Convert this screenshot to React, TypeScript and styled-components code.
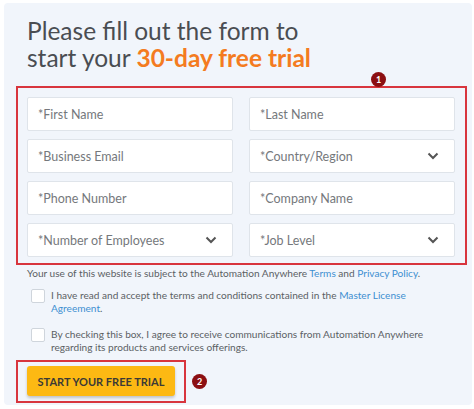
import React from 'react';
import styled, { createGlobalStyle } from 'styled-components';

const GlobalStyle = createGlobalStyle`
  html, body {
    margin: 0;
    padding: 0;
    background: #ffffff;
  }
  body {
    font-family: Lato, "Open Sans", "Liberation Sans", sans-serif;
  }
`;

const Chevron = () => (
  <svg width="12" height="8" viewBox="0 0 12 8">
    <path d="M1.5 1.5 L6 6 L10.5 1.5" fill="none" stroke="#555" strokeWidth="2" />
  </svg>
);

const App = () => {
  return (
    <>
      <GlobalStyle />
      <Panel>
        <Title>
          Please fill out the form to
          <br />
          start your <Accent>30-day free trial</Accent>
        </Title>
        <BadgeRow>
          <Badge>1</Badge>
        </BadgeRow>
        <Highlight>
          <FieldGrid>
            <Field>*First Name</Field>
            <Field>*Last Name</Field>
            <Field>*Business Email</Field>
            <Field>
              *Country/Region
              <Chevron />
            </Field>
            <Field>*Phone Number</Field>
            <Field>*Company Name</Field>
            <Field>
              *Number of Employees
              <Chevron />
            </Field>
            <Field>
              *Job Level
              <Chevron />
            </Field>
          </FieldGrid>
        </Highlight>
        <Notice>
          Your use of this website is subject to the Automation Anywhere <Link>Terms</Link> and{' '}
          <Link>Privacy Policy</Link>.
        </Notice>
        <CheckRow>
          <Box />
          <CheckText>
            I have read and accept the terms and conditions contained in the <Link>Master License Agreement</Link>.
          </CheckText>
        </CheckRow>
        <CheckRow>
          <Box />
          <CheckText>
            By checking this box, I agree to receive communications from Automation Anywhere regarding its products
            and services offerings.
          </CheckText>
        </CheckRow>
        <ButtonRow>
          <ButtonFrame>
            <TrialButton>START YOUR FREE TRIAL</TrialButton>
          </ButtonFrame>
          <Badge>2</Badge>
        </ButtonRow>
      </Panel>
    </>
  );
};

const Panel = styled.div`
  margin: 3px 2px 0 4px;
  height: 402px;
  box-sizing: border-box;
  background: #f1f5fb;
  border-radius: 4px;
  padding: 14px 5px 0 12px;
`;

const Title = styled.h1`
  margin: 0 0 0 11px;
  font-size: 24.5px;
  line-height: 27px;
  font-weight: 400;
  color: #4a4d52;
`;

const Accent = styled.span`
  color: #f47b20;
  font-weight: 700;
`;

const BadgeRow = styled.div`
  display: flex;
  justify-content: flex-end;
  padding-right: 81px;
  margin-top: 1px;
  height: 15px;
`;

const Badge = styled.span`
  width: 15px;
  height: 15px;
  border-radius: 50%;
  background: #8c0f12;
  color: #fff;
  font-size: 9px;
  font-weight: 700;
  display: flex;
  align-items: center;
  justify-content: center;
  line-height: 1;
`;

const Highlight = styled.div`
  border: 2px solid #d8353d;
  margin-top: -1px;
  padding: 9px 10px 6px 9px;
`;

const FieldGrid = styled.div`
  display: grid;
  grid-template-columns: 206px 206px;
  column-gap: 16px;
  row-gap: 8px;
`;

const Field = styled.div`
  height: 34px;
  box-sizing: border-box;
  background: #fff;
  border: 1px solid #dfe4ea;
  border-radius: 2px;
  padding: 0 15px 0 10px;
  display: flex;
  align-items: center;
  justify-content: space-between;
  font-size: 12.5px;
  color: #75787c;
`;

const Notice = styled.p`
  margin: 2px 0 0 11px;
  font-size: 10.1px;
  color: #5b5f64;
`;

const Link = styled.span`
  color: #3d8fd1;
`;

const CheckRow = styled.div`
  display: flex;
  gap: 6px;
  margin: 10px 34px 0 15px;
  & + & {
    margin-top: 14px;
  }
`;

const Box = styled.span`
  flex: none;
  width: 12px;
  height: 12px;
  background: #fff;
  border: 1px solid #cfd5dc;
  border-radius: 2px;
`;

const CheckText = styled.span`
  font-size: 10.1px;
  line-height: 12.5px;
  color: #5b5f64;
`;

const ButtonRow = styled.div`
  display: flex;
  align-items: center;
  gap: 6px;
  margin-top: 7px;
`;

const ButtonFrame = styled.div`
  border: 2px solid #d8353d;
  padding: 4px 9px 5px 9px;
`;

const TrialButton = styled.button`
  width: 148px;
  height: 30px;
  border: none;
  border-radius: 3px;
  background: #fdb913;
  box-shadow: 0 2px 3px rgba(0, 0, 0, 0.2);
  font-family: Lato, "Liberation Sans", sans-serif;
  font-size: 11px;
  font-weight: 700;
  color: #3b3a36;
  padding: 0;
`;

export default App;
